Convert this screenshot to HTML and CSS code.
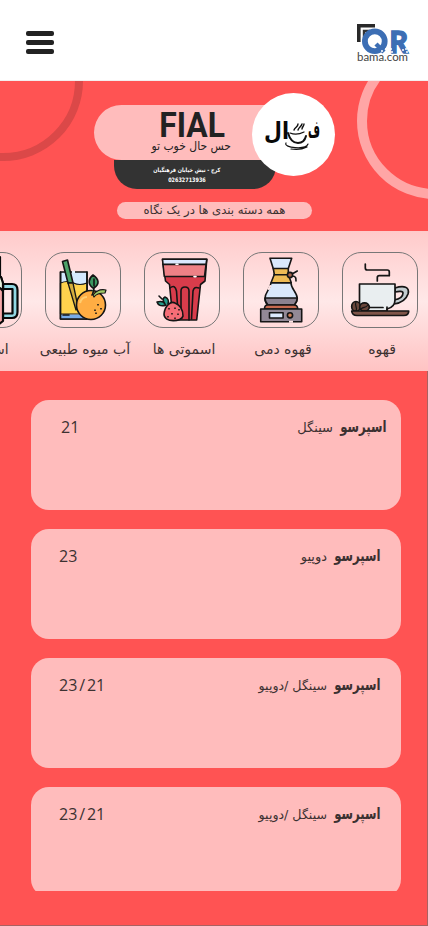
FILE: index.html
```html
<!DOCTYPE html>
<html lang="fa" dir="rtl">
<head>
<meta charset="utf-8">
<title>FIAL</title>
<link rel="stylesheet" href="styles.css">
</head>
<body>
<header class="topbar">
  <svg class="brand" viewBox="0 0 52 40" width="52" height="40" direction="ltr">
    <path d="M1.8 18V1.800H18" fill="none" stroke="#292929" stroke-width="3.600"/>
    <path d="M7 14V7H13" fill="none" stroke="#333" stroke-width="2.400"/>
    <circle cx="17.800" cy="17.300" r="9.900" fill="#fff" stroke="#3c6eb4" stroke-width="5.800"/>
    <path d="M19 20l8 8" stroke="#3c6eb4" stroke-width="4.500"/>
    <text class="brand-r" x="32.500" y="28.500" textLength="18.500" lengthAdjust="spacingAndGlyphs">R</text>
    <path d="M24 27h2m2-2h2m-1 3h2m2-3h2m-1 3h2m9-2h2m1-1h2m-1 3h2m-22-1h2" stroke="#fff" stroke-width="1.300"/>
    <text class="brand-name" x="0" y="36.900" textLength="51" lengthAdjust="spacingAndGlyphs">bama.com</text>
  </svg>
  <div class="burger"><i></i><i></i><i></i></div>
</header>
<section class="hero">
  <span class="ring ring-dark"></span>
  <span class="ring ring-light"></span>
  <div class="shop">
    <div class="plate">
      <h1><span class="t">FIAL</span></h1>
      <p><span class="t">حس حال خوب تو</span></p>
    </div>
    <div class="address">
      <p class="street"><span class="t">کرج - نبش خیابان فرهنگیان</span></p>
      <p class="phone"><span class="t">02632713936</span></p>
    </div>
    <div class="avatar">
      <svg viewBox="0 0 83 83" width="83" height="83">
        <text class="script" x="68" y="45" textLength="12" lengthAdjust="spacingAndGlyphs">ف</text>
        <text class="script" x="37" y="46" textLength="25" lengthAdjust="spacingAndGlyphs">ال</text>
        <g fill="none" stroke="#111" stroke-linecap="round">
          <path d="M36 40c2 7 6 10 10 10s7-3 8-7" stroke-width="2"/>
          <path d="M38 40c5 2 10 1 14-1" stroke-width="1.200"/>
          <path d="M34 50c-3 5 20 7 22 1M39 56c6 1 12 0 16-2" stroke-width="1.200"/>
          <path d="M42 37c1-3 4-3 4-6M46 37c1-3 3-3 4-6M50 36c0-2 2-3 2-5" stroke-width="1.400"/>
        </g>
      </svg>
    </div>
  </div>
  <div class="overview"><span class="t">همه دسته بندی ها در یک نگاه</span></div>
</section>
<nav class="cats">
  <a class="cat"><span class="tile">
    <svg viewBox="0 0 76 76"><g stroke="#151515" stroke-width="1.700" stroke-linejoin="round" stroke-linecap="round">
      <path d="M23.300 12v4q0 2 2 2h20q2 0 2 2v3.700h-10q-2 0-2 2V29" fill="none"/>
      <path d="M53 36c9-3 15-1 13 6-2 6-7 9-14 10v-4c6-1 9-4 9-7 0-2-4-2-8-1z" fill="#c3cdd0"/>
      <path d="M17.500 32h35.500v16c0 6-4 8-8 9v2H20q-2.500-3-2.500-8z" fill="#e9eef0"/>
      <path d="M24 55.500h17M45 55v4" fill="none"/>
      <ellipse cx="14" cy="54.500" rx="4.300" ry="5" fill="#69463b"/><ellipse cx="22.500" cy="55" rx="4.800" ry="4.200" fill="#69463b"/>
      <path d="M14 50c-2 4 2 5 0 9M19 57c3-3 4 0 7-4" fill="none" stroke-width="1.200"/>
      <path d="M9.700 59h57c0 3-2 4.500-5 4.500H15c-3 0-5-1.500-5.300-4.500z" fill="#7f5549"/></g></svg>
  </span><b><span class="t">قهوه</span></b></a>
  <a class="cat"><span class="tile">
    <svg viewBox="0 0 76 76"><g stroke="#151515" stroke-width="1.600" stroke-linejoin="round" stroke-linecap="round">
      <path d="M27 6.300h21.700l-3.500 10.500H30.300z" fill="#d9e8fc"/>
      <path d="M30.300 16.500h15v6l3 8.200H28l3.300-8.200z" fill="#edba55"/><path d="M31 22.800h14"/>
      <path d="M28 31h20c0 6 6 9 6.300 15.500 0 3-1.500 5-3 6.500H25c-2-1.500-3-3.500-3-6.500C22 40 27 38 28 31z" fill="#d9e8fc"/>
      <path d="M22 46h32.300c0 3-1.500 5-3 7H25c-2-2-3-4-3-7z" fill="#8b8290"/>
      <path d="M27.300 34l-1.500 3" stroke="#ffe4e4" stroke-width="2"/>
      <path d="M49 22l5.300-3M49 24c4 0 4 2 4 5" fill="none"/><circle cx="47" cy="23" r="2.600" fill="#a8644c"/>
      <path d="M21.500 57q0-4 3-4H51q3.700 0 3.700 4z" fill="#c76a50"/>
      <path d="M17.700 57h41v12.700h-41z" fill="#928996"/><path d="M26.500 60.800h13.600v5.200H26.500z" fill="#dceafd"/>
      <circle cx="47" cy="63.300" r="2.600" fill="#d08057"/></g><path d="M46 69.700h4" stroke="#ffe4e4" stroke-width="2"/></svg>
  </span><b><span class="t">قهوه دمی</span></b></a>
  <a class="cat"><span class="tile">
    <svg viewBox="0 0 76 76"><g stroke="#151515" stroke-width="1.600" stroke-linejoin="round" stroke-linecap="round">
      <path d="M18.500 7.300h44.300L61 29l-4.500 3.500L52.700 68H29L25.500 32.500 21.500 29z" fill="#d83c4b"/>
      <path d="M19 12.500h43l-1.500 12H20.300z" fill="#ee8186"/><path d="M18.500 7.300h44.300l-.8 5H19z" fill="#dbe9ff"/>
      <path d="M26 36q5-4 6.500 3l1 14M37 66V39q0-4 4-4t4 4v29M47.500 67l1.500-28q1-5 6-3" fill="none"/>
      <path d="M32 12.300h2M50 24.600h2" stroke="#fff"/>
      <path d="M20 62c1-9 7-13 11-11 5 2 8 7 8 13-1 6-19 7-19-2z" fill="#f56d76"/>
      <path d="M22 53c-5 2-8 0-9-3 4-1 7 0 8 2-3-4-2-6 0-7 3 1 4 4 3 7M15 44l3 3" fill="#229b89"/></g>
      <path d="M25 56v1.500m6-2V57m-3 4v1.500m6-1V63m-10 1v1.500m7 0V67m4-10v1.500" stroke="#151515" stroke-width="1.500"/></svg>
  </span><b><span class="t">اسموتی ها</span></b></a>
  <a class="cat"><span class="tile">
    <svg viewBox="0 0 76 76"><g stroke="#151515" stroke-width="1.600" stroke-linejoin="round" stroke-linecap="round">
      <path d="M15.500 20H42v47H15.500z" fill="#d4e9ff"/><path d="M15.500 31q7-3 13 0t13.500 0v31H15.500z" fill="#ffd24d" stroke-width="1.200"/>
      <path d="M15.500 63H42v4H15.500z" fill="#78abe8" stroke="none"/><path d="M15.500 20v47H42M42 20v24M18 63h6" fill="none"/>
      <path d="M17.500 9.500l5-1.500L28 31h-5z" fill="#4da369"/><path d="M23 31h5l5 24-2 3z" fill="#d4ad3d" stroke-width="1.300"/>
      <circle cx="46" cy="53" r="14.500" fill="#ffad43"/>
      <path d="M48 36c-6-4-4-10 0-13 6 4 7 9 1 13 0 4-1 5-2 7M49 27v7" fill="#3c9861"/>
      <path d="M48 43c3-4 8-6 13-5l-1 3c-5 0-9 1-11 4z" fill="#9dc968" stroke-width="1.200"/></g>
      <path d="M27 20h3" stroke="#e6f1ff" stroke-width="2.500"/><path d="M35 51c1-4 4-6 7-6" stroke="#ffce70" stroke-width="2" fill="none"/>
      <path d="M53 52v1.500m-3 4V59m6-3v1.500m-5 3V62" stroke="#151515" stroke-width="1.600"/></svg>
  </span><b><span class="t">آب میوه طبیعی</span></b></a>
  <a class="cat"><span class="tile">
    <svg viewBox="0 0 76 76"><g stroke="#080808" stroke-width="2.200" stroke-linejoin="round">
      <path d="M20 5h34v19H20z" fill="#ffdfe0"/><path d="M57 32h9q5.500 0 5.500 6v22q0 6-5.500 6h-9v-4.500h9.500V37H57z" fill="#92d8e3"/>
      <path d="M18 25h37l2 7v37l-5 4H18z" fill="#f7a8a9"/><path d="M18 25h37l2 6v8l-3-3H18z" fill="#e8f2df"/></g></svg>
  </span><b><span class="t">اسلاش</span></b></a>
</nav>
<main class="menu">
  <div class="list">
    <article class="card first"><div class="name"><h2><span class="t">اسپرسو</span></h2><small><span class="t">سینگل</span></small></div><div class="price" dir="ltr">21</div></article>
    <article class="card"><div class="name"><h2><span class="t">اسپرسو</span></h2><small><span class="t">دوپیو</span></small></div><div class="price" dir="ltr">23</div></article>
    <article class="card"><div class="name"><h2><span class="t">اسپرسو</span></h2><small class="both"><span class="t">سینگل /دوپیو</span></small></div><div class="price" dir="ltr">23 / 21</div></article>
    <article class="card"><div class="name"><h2><span class="t">اسپرسو</span></h2><small class="both"><span class="t">سینگل /دوپیو</span></small></div><div class="price" dir="ltr">23 / 21</div></article>
  </div>
</main>
</body>
</html>
```
FILE: styles.css
```css
* { box-sizing: border-box; }
body { margin: 0; width: 428px; height: 926px; overflow: hidden; background: #ff5353; color: #3c3131; font-family: "DejaVu Sans", sans-serif; }
h1, h2, p { margin: 0; font-weight: 400; }
.t { display: inline-block; white-space: nowrap; }

.topbar { height: 81px; background: #fff; border-bottom: 1px solid #f3eeee; display: flex; justify-content: space-between; align-items: flex-start; padding: 24px 19px 0 26px; }
.brand { overflow: visible; }
.brand-r { font: 900 31px Lato, sans-serif; fill: #3c6eb4; stroke: #3c6eb4; stroke-width: 1.4px; direction: ltr; }
.brand-name { font: 400 11px Lato, sans-serif; fill: #444; direction: ltr; }
.burger { width: 28px; padding-top: 7px; display: grid; gap: 4px; }
.burger i { height: 5px; border-radius: 2px; background: #222; }

.hero { position: relative; height: 150px; overflow: hidden; padding-top: 12px; }
.ring { position: absolute; border-radius: 50%; }
.ring-dark { left: -77px; top: -80px; width: 160px; height: 160px; border: 8px solid #db4848; }
.ring-light { left: 357px; top: -38px; width: 156px; height: 156px; border: 10px solid #ffa6a6; }
.shop { position: relative; width: 241px; height: 96px; margin-right: 93px; padding-top: 12px; }
.plate { position: relative; z-index: 1; width: 195px; height: 55px; margin-right: auto; padding-top: 4px; border-radius: 28px 0 0 28px; background: #ffbcbc; text-align: center; color: #222; }
.plate h1 { font: 700 35px/34px Roboto, sans-serif; height: 30px; padding-left: 1px; }
.plate h1 .t { transform: scaleX(.91); }
.plate p { font-size: 12px; line-height: 14px; }
.plate p .t { transform: scaleX(.9); }
.address { width: 162px; height: 29px; margin-right: 59px; border-radius: 0 0 23px 23px; background: #333; color: #fff; text-align: center; padding: 5px 17px 0 0; }
.address p { font-weight: 700; font-size: 6px; line-height: 10px; }
.address .t { transform: scaleX(.82); }
.avatar { position: absolute; z-index: 2; right: 0; top: 0; width: 83px; height: 83px; border-radius: 50%; background: #fff; }
.script { font: bold 24px "DejaVu Sans", sans-serif; fill: #080808; direction: rtl; }
.overview { width: 195px; height: 17px; margin: 13px 116px 0 0; border-radius: 9px; background: #ffbcbc; text-align: center; font-size: 11.7px; line-height: 16px; }

.cats { height: 140px; background: linear-gradient(#ffcaca, #ffe8e8 50%, #ffc3c3); display: flex; gap: 23px; padding: 21px 10px 0 0; overflow: hidden; }
.cat { flex: 0 0 76px; width: 76px; min-width: 0; display: flex; flex-direction: column; align-items: center; }
.tile { display: block; width: 76px; height: 76px; border: 1px solid #777; border-radius: 19px; overflow: hidden; }
.tile svg { display: block; width: 76px; height: 76px; margin: -1px; }
.cat b { font-weight: 400; font-size: 14px; line-height: 20px; margin-top: 11px; padding-left: 4px; white-space: nowrap; }
.cat:last-child b { padding-left: 8px; }

.menu { height: 555px; padding: 29px 26px 0 31px; border-right: 1px solid #a96161; border-bottom: 1px solid #a96161; }
.list { height: 491px; overflow: hidden; display: flex; flex-direction: column; gap: 19px; }
.card { flex: 0 0 110px; border-radius: 18px; background: #ffbcbc; display: flex; justify-content: space-between; align-items: flex-start; padding: 16px 21px 0 28px; }
.card.first { padding-right: 15px; padding-left: 30px; }
.name { display: flex; align-items: baseline; gap: 7px; line-height: 22px; }
.name h2 { width: 46px; font-weight: 700; font-size: 16px; }
.name h2 .t { transform: scaleX(.73); transform-origin: right; }
.name small { font-size: 13px; }
.name .both { font-size: 12.6px; }
.price { font: 400 16px/22px "Open Sans", sans-serif; white-space: nowrap; word-spacing: -2.3px; }
```
